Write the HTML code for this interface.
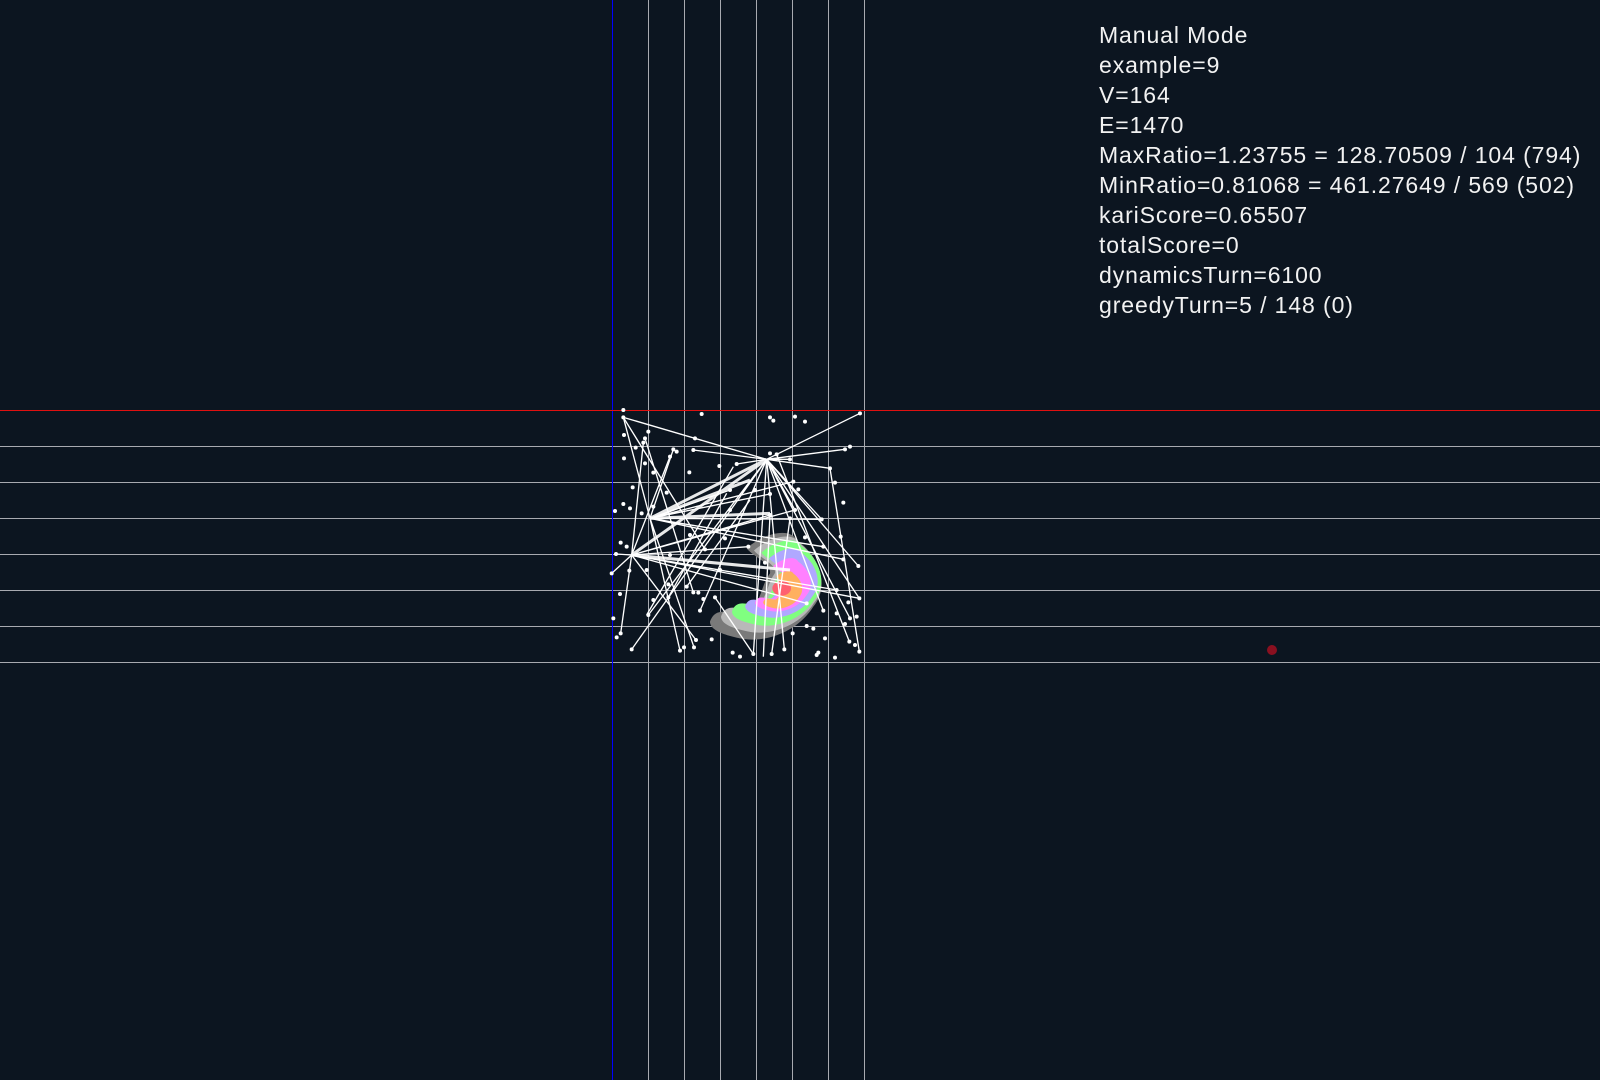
<!DOCTYPE html>
<html><head><meta charset="utf-8"><style>
html,body{margin:0;padding:0;background:#0c1520;width:1600px;height:1080px;overflow:hidden}
#t{position:absolute;left:1099px;top:20px;color:#f2f2f2;font-family:"Liberation Sans","Noto Sans CJK JP",sans-serif;font-size:23px;letter-spacing:0.9px;line-height:30px;white-space:pre}
svg{position:absolute;left:0;top:0}
</style></head><body>
<svg width="1600" height="1080" viewBox="0 0 1600 1080">
<g stroke="#a8aab0" stroke-width="1">
<line x1="648.5" y1="0" x2="648.5" y2="1080"/><line x1="684.5" y1="0" x2="684.5" y2="1080"/><line x1="720.5" y1="0" x2="720.5" y2="1080"/><line x1="756.5" y1="0" x2="756.5" y2="1080"/><line x1="792.5" y1="0" x2="792.5" y2="1080"/><line x1="828.5" y1="0" x2="828.5" y2="1080"/><line x1="864.5" y1="0" x2="864.5" y2="1080"/>
<line x1="0" y1="446.5" x2="1600" y2="446.5"/><line x1="0" y1="482.5" x2="1600" y2="482.5"/><line x1="0" y1="518.5" x2="1600" y2="518.5"/><line x1="0" y1="554.5" x2="1600" y2="554.5"/><line x1="0" y1="590.5" x2="1600" y2="590.5"/><line x1="0" y1="626.5" x2="1600" y2="626.5"/><line x1="0" y1="662.5" x2="1600" y2="662.5"/>
</g>
<line x1="612.5" y1="0" x2="612.5" y2="1080" stroke="#0000ff" stroke-width="1"/>
<line x1="0" y1="410.5" x2="1600" y2="410.5" stroke="#e01010" stroke-width="1"/>
<circle cx="1272" cy="650" r="5" fill="#8a1020"/>
<g transform="translate(590,400) scale(0.33333)">
<g transform="translate(590,560)">
<path transform="scale(1.0)" fill="#7a7a7a" d="M-230,105 C-210,50 -160,90 -120,80 C-70,40 -80,0 -50,-40 C-45,-70 -100,-90 -120,-115 C-70,-160 10,-180 30,-140 C100,-90 130,0 80,60 C30,140 -70,170 -140,155 C-190,145 -230,130 -230,105Z"/>
<path transform="translate(10,-5) scale(0.9)" fill="#b8b8b8" d="M-230,105 C-210,50 -160,90 -120,80 C-70,40 -80,0 -50,-40 C-45,-70 -100,-90 -120,-115 C-70,-160 10,-180 30,-140 C100,-90 130,0 80,60 C30,140 -70,170 -140,155 C-190,145 -230,130 -230,105Z"/>
<path transform="translate(20,-10) scale(0.8)" fill="#80ff80" d="M-230,105 C-210,50 -160,90 -120,80 C-70,40 -80,0 -50,-40 C-45,-70 -100,-90 -120,-115 C-70,-160 10,-180 30,-140 C100,-90 130,0 80,60 C30,140 -70,170 -140,155 C-190,145 -230,130 -230,105Z"/>
<path transform="translate(25,-10) scale(0.65)" fill="#b0a8ff" d="M-230,105 C-210,50 -160,90 -120,80 C-70,40 -80,0 -50,-40 C-45,-70 -100,-90 -120,-115 C-70,-160 10,-180 30,-140 C100,-90 130,0 80,60 C30,140 -70,170 -140,155 C-190,145 -230,130 -230,105Z"/>
<path transform="translate(20,-5) scale(0.5)" fill="#ff80ff" d="M-230,105 C-210,50 -160,90 -120,80 C-70,40 -80,0 -50,-40 C-45,-70 -100,-90 -120,-115 C-70,-160 10,-180 30,-140 C100,-90 130,0 80,60 C30,140 -70,170 -140,155 C-190,145 -230,130 -230,105Z"/>
<path transform="translate(10,10) scale(0.35)" fill="#ffb060" d="M-230,105 C-210,50 -160,90 -120,80 C-70,40 -80,0 -50,-40 C-45,-70 -100,-90 -120,-115 C-70,-160 10,-180 30,-140 C100,-90 130,0 80,60 C30,140 -70,170 -140,155 C-190,145 -230,130 -230,105Z"/>
<ellipse cx="-15" cy="5" rx="28" ry="22" fill="#ff6070"/>
</g>
<g stroke="#ffffff" stroke-width="4" fill="none">
<path d="M530,178L100,52M530,178L310,150M530,178L810,40M530,178L765,148M530,178L720,205M530,178L695,358M530,178L805,498M530,178L808,595M530,178L780,655M530,178L440,192M530,178L600,178M530,178L615,330M530,178L700,632M530,178L583,748M530,178L490,762M530,178L330,632M530,178L125,748M530,178L175,645"/>
<path d="M180,355L100,52M180,355L250,148M180,355L695,358M180,355L610,245M180,355L700,440M180,355L270,752M180,355L312,742M180,355L760,478M180,355L540,282M180,355L420,270"/>
<path d="M125,465L160,128M125,465L240,170M125,465L78,462M125,465L65,520M125,465L808,595M125,465L740,570M125,465L318,720M125,465L92,700M125,465L540,345M125,465L650,610M125,465L390,510M125,465L475,440M125,465L615,330"/>
<path d="M165,115L310,577M100,52L345,448M720,205L808,755M560,163L778,725M490,762L375,592M430,200L170,645M410,280L235,592M480,300L290,560M600,355L545,762M540,345L520,770"/>
</g>
<g stroke="#ffffff" stroke-width="9" fill="none" opacity="0.9">
<path d="M530,178L180,355M530,178L125,465M180,355L540,340M125,465L600,510M180,355L480,240"/>
</g>
<g fill="#ffffff">
<circle cx="100" cy="30" r="6"/><circle cx="100" cy="52" r="6"/><circle cx="335" cy="42" r="6"/><circle cx="540" cy="52" r="6"/><circle cx="550" cy="62" r="6"/><circle cx="615" cy="50" r="6"/><circle cx="645" cy="65" r="6"/><circle cx="810" cy="40" r="6"/><circle cx="102" cy="105" r="6"/><circle cx="165" cy="115" r="6"/><circle cx="175" cy="95" r="6"/><circle cx="137" cy="143" r="6"/><circle cx="160" cy="128" r="6"/><circle cx="250" cy="148" r="6"/><circle cx="260" cy="155" r="6"/><circle cx="315" cy="115" r="6"/><circle cx="310" cy="150" r="6"/><circle cx="540" cy="160" r="6"/><circle cx="560" cy="163" r="6"/><circle cx="600" cy="178" r="6"/><circle cx="765" cy="148" r="6"/><circle cx="780" cy="140" r="6"/><circle cx="102" cy="175" r="6"/><circle cx="165" cy="190" r="6"/><circle cx="240" cy="170" r="6"/><circle cx="190" cy="218" r="6"/><circle cx="298" cy="217" r="6"/><circle cx="388" cy="198" r="6"/><circle cx="440" cy="192" r="6"/><circle cx="720" cy="205" r="6"/><circle cx="735" cy="248" r="6"/><circle cx="128" cy="262" r="6"/><circle cx="230" cy="278" r="6"/><circle cx="420" cy="270" r="6"/><circle cx="495" cy="270" r="6"/><circle cx="540" cy="282" r="6"/><circle cx="610" cy="245" r="6"/><circle cx="625" cy="268" r="6"/><circle cx="75" cy="333" r="6"/><circle cx="100" cy="312" r="6"/><circle cx="120" cy="325" r="6"/><circle cx="155" cy="340" r="6"/><circle cx="190" cy="320" r="6"/><circle cx="760" cy="308" r="6"/><circle cx="695" cy="358" r="6"/><circle cx="600" cy="355" r="6"/><circle cx="540" cy="345" r="6"/><circle cx="420" cy="330" r="6"/><circle cx="92" cy="428" r="6"/><circle cx="78" cy="462" r="6"/><circle cx="110" cy="440" r="6"/><circle cx="118" cy="512" r="6"/><circle cx="65" cy="520" r="6"/><circle cx="170" cy="510" r="6"/><circle cx="240" cy="465" r="6"/><circle cx="300" cy="405" r="6"/><circle cx="345" cy="448" r="6"/><circle cx="405" cy="415" r="6"/><circle cx="475" cy="440" r="6"/><circle cx="525" cy="488" r="6"/><circle cx="615" cy="330" r="6"/><circle cx="645" cy="412" r="6"/><circle cx="700" cy="440" r="6"/><circle cx="752" cy="410" r="6"/><circle cx="760" cy="478" r="6"/><circle cx="805" cy="498" r="6"/><circle cx="90" cy="582" r="6"/><circle cx="190" cy="600" r="6"/><circle cx="235" cy="553" r="6"/><circle cx="290" cy="560" r="6"/><circle cx="310" cy="577" r="6"/><circle cx="325" cy="578" r="6"/><circle cx="340" cy="597" r="6"/><circle cx="375" cy="592" r="6"/><circle cx="390" cy="510" r="6"/><circle cx="235" cy="592" r="6"/><circle cx="330" cy="632" r="6"/><circle cx="175" cy="645" r="6"/><circle cx="70" cy="655" r="6"/><circle cx="80" cy="712" r="6"/><circle cx="92" cy="700" r="6"/><circle cx="125" cy="748" r="6"/><circle cx="270" cy="752" r="6"/><circle cx="282" cy="742" r="6"/><circle cx="312" cy="742" r="6"/><circle cx="318" cy="720" r="6"/><circle cx="365" cy="718" r="6"/><circle cx="428" cy="758" r="6"/><circle cx="450" cy="770" r="6"/><circle cx="490" cy="762" r="6"/><circle cx="545" cy="762" r="6"/><circle cx="583" cy="748" r="6"/><circle cx="608" cy="700" r="6"/><circle cx="650" cy="678" r="6"/><circle cx="670" cy="686" r="6"/><circle cx="705" cy="715" r="6"/><circle cx="680" cy="765" r="6"/><circle cx="685" cy="758" r="6"/><circle cx="735" cy="773" r="6"/><circle cx="778" cy="725" r="6"/><circle cx="795" cy="735" r="6"/><circle cx="808" cy="755" r="6"/><circle cx="780" cy="655" r="6"/><circle cx="800" cy="650" r="6"/><circle cx="765" cy="672" r="6"/><circle cx="740" cy="640" r="6"/><circle cx="740" cy="570" r="6"/><circle cx="808" cy="595" r="6"/><circle cx="775" cy="607" r="6"/><circle cx="700" cy="632" r="6"/><circle cx="650" cy="610" r="6"/>
</g>
</g>
</svg>
<div id="t">Manual Mode
example=9
V=164
E=1470
MaxRatio=1.23755 = 128.70509 / 104 (794)
MinRatio=0.81068 = 461.27649 / 569 (502)
kariScore=0.65507
totalScore=0
dynamicsTurn=6100
greedyTurn=5 / 148 (0)</div>
</body></html>
